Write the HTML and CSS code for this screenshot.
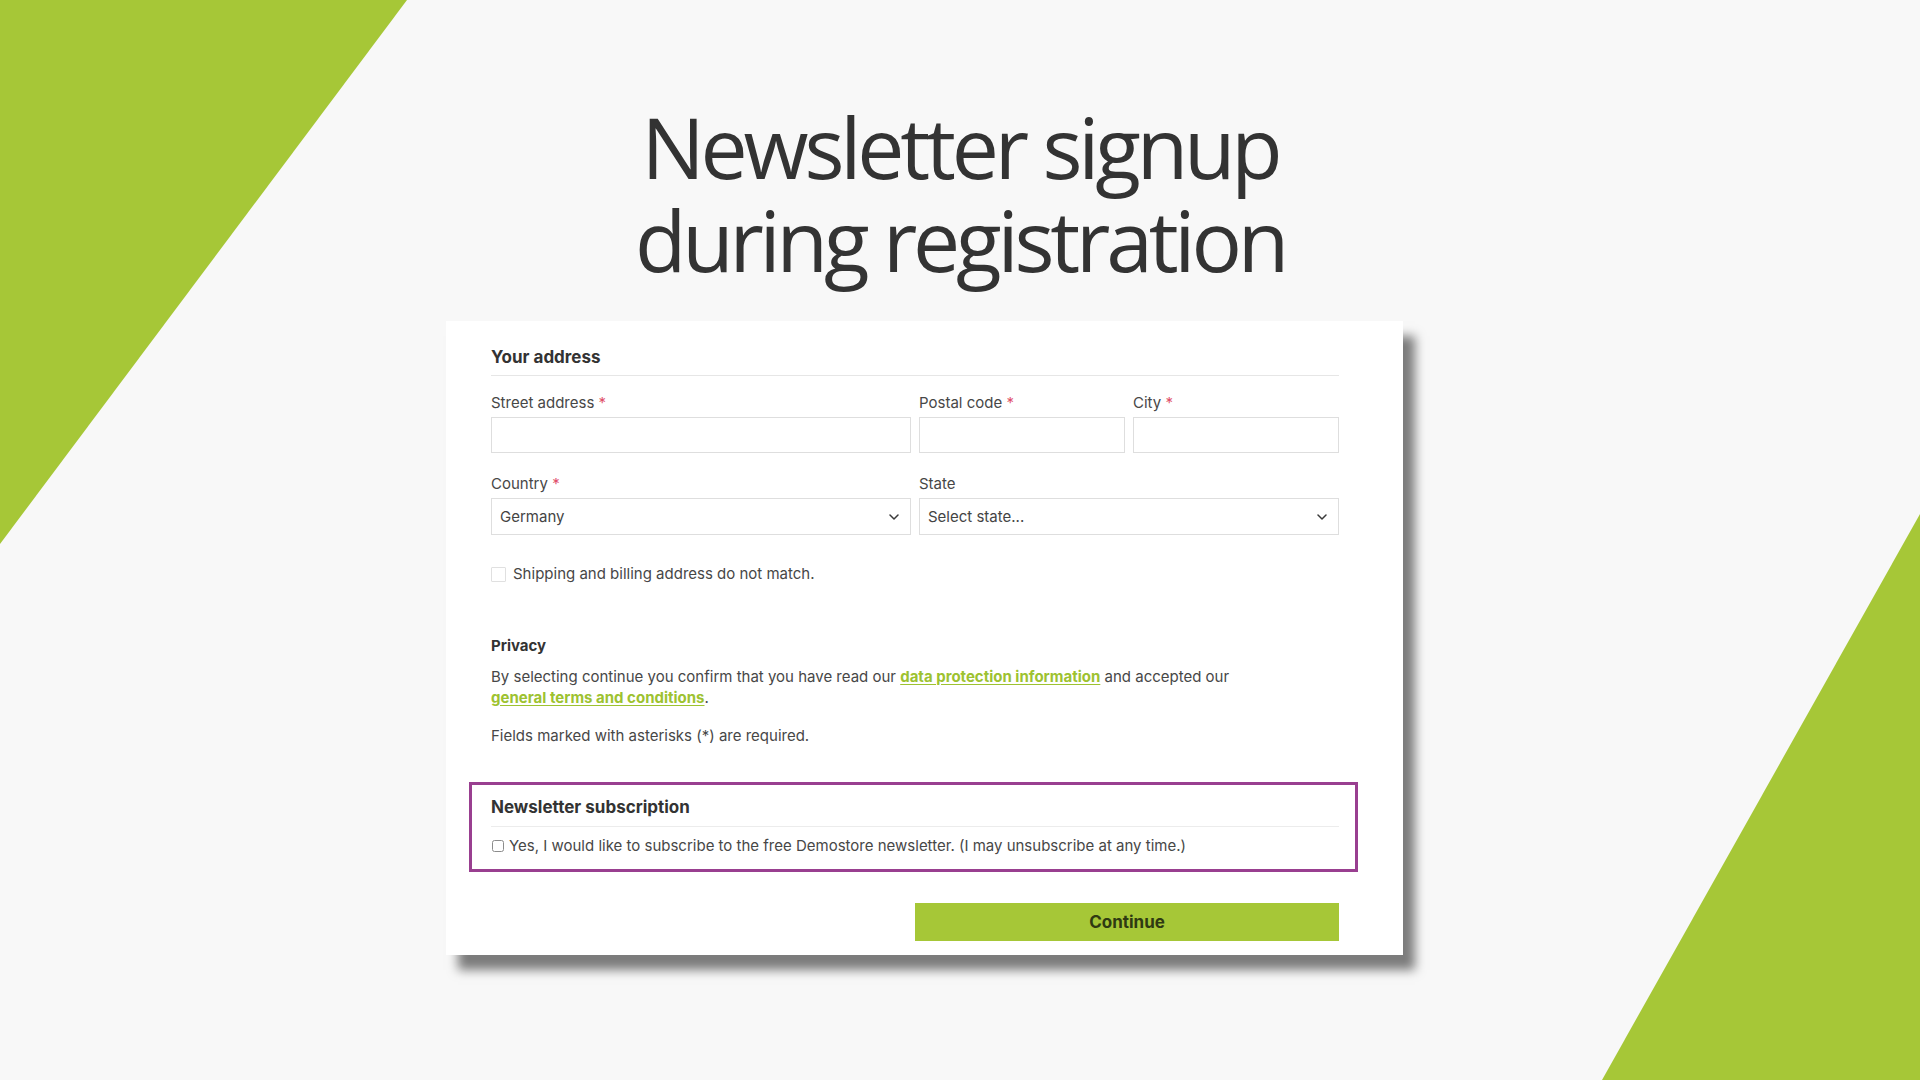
FILE: index.html
```html
<!DOCTYPE html>
<html lang="en">
<head>
<meta charset="utf-8">
<title>Newsletter signup during registration</title>
<link rel="stylesheet" href="styles.css">
</head>
<body>
<div class="page">
  <h1 class="title"><span class="title-line">Newsletter signup</span><span class="title-line">during registration</span></h1>

  <div class="card">
    <h2 class="section-title">Your address</h2>

    <div class="grid">
      <div class="field span2">
        <label class="label">Street address <span class="req">*</span></label>
        <div class="input"></div>
      </div>
      <div class="field">
        <label class="label">Postal code <span class="req">*</span></label>
        <div class="input"></div>
      </div>
      <div class="field">
        <label class="label">City <span class="req">*</span></label>
        <div class="input"></div>
      </div>
      <div class="field span2">
        <label class="label">Country <span class="req">*</span></label>
        <div class="input select">
          <span>Germany</span>
          <svg class="chev" width="10" height="6" viewBox="0 0 10 6"><path d="M1 1l4 4 4-4" fill="none" stroke="#3a3a3a" stroke-width="1.5" stroke-linecap="round" stroke-linejoin="round"/></svg>
        </div>
      </div>
      <div class="field span2">
        <label class="label">State</label>
        <div class="input select">
          <span>Select state...</span>
          <svg class="chev" width="10" height="6" viewBox="0 0 10 6"><path d="M1 1l4 4 4-4" fill="none" stroke="#3a3a3a" stroke-width="1.5" stroke-linecap="round" stroke-linejoin="round"/></svg>
        </div>
      </div>
    </div>

    <div class="check-row">
      <span class="box"></span>
      <span>Shipping and billing address do not match.</span>
    </div>

    <h3 class="privacy-title">Privacy</h3>
    <p class="privacy-text">By selecting continue you confirm that you have read our <a class="link">data protection information</a> and accepted our <a class="link">general terms and conditions</a>.</p>
    <p class="note">Fields marked with asterisks (*) are required.</p>

    <div class="newsletter">
      <h2 class="section-title">Newsletter subscription</h2>
      <div class="check-row small">
        <span class="box-sm"></span>
        <span>Yes, I would like to subscribe to the free Demostore newsletter. (I may unsubscribe at any time.)</span>
      </div>
    </div>

    <div class="actions">
      <button class="btn">Continue</button>
    </div>
  </div>
</div>
</body>
</html>
```

FILE: styles.css
```css
* { box-sizing: border-box; }

html, body {
  margin: 0;
  padding: 0;
}

body {
  background: #f8f8f8;
  font-family: Inter, "Liberation Sans", sans-serif;
  color: #474747;
}

.page {
  position: relative;
  width: 1920px;
  height: 1080px;
  overflow: hidden;
  padding-top: 100px;
}

.page::before,
.page::after {
  content: "";
  position: absolute;
  left: 0;
  top: 0;
  width: 1920px;
  height: 1080px;
  background: #a6c737;
  z-index: 0;
}

.page::before {
  clip-path: polygon(0 0, 407px 0, 0 544px);
}

.page::after {
  clip-path: polygon(1920px 514px, 1920px 1080px, 1602px 1080px);
}

.title {
  position: relative;
  z-index: 1;
  margin: 0;
  text-align: center;
  font-family: "Open Sans", sans-serif;
  font-weight: 400;
  font-size: 84px;
  line-height: 93px;
  letter-spacing: -0.05em;
  color: #333333;
}

.title-line {
  display: block;
}

.card {
  position: relative;
  z-index: 1;
  width: 957px;
  margin: 35px 0 0 446px;
  background: #ffffff;
  padding: 24px 64px 14px 45px;
  box-shadow: 12px 15px 10px rgba(0, 0, 0, 0.5);
}

.section-title {
  margin: 0;
  font-size: 17px;
  line-height: 24px;
  font-weight: 700;
  color: #333333;
  padding-bottom: 6px;
  border-bottom: 1px solid #e6e6e6;
}

.grid {
  display: grid;
  grid-template-columns: repeat(4, 1fr);
  column-gap: 8px;
  row-gap: 21px;
  margin-top: 17px;
}

.span2 { grid-column: span 2; }

.label {
  display: block;
  font-size: 15px;
  line-height: 20px;
  color: #474747;
  margin-bottom: 4px;
}

.req { color: #e0506a; }

.input {
  height: 36px;
  border: 1px solid #dedede;
  background: #ffffff;
}

.select {
  display: flex;
  align-items: center;
  justify-content: space-between;
  height: 37px;
  padding: 0 11px 0 8px;
  font-size: 15px;
  color: #444444;
}

.chev { display: block; }

.check-row {
  display: flex;
  align-items: center;
  gap: 7px;
  margin-top: 29px;
  font-size: 15px;
  line-height: 20px;
  color: #474747;
}

.box {
  width: 15px;
  height: 15px;
  border: 1px solid #e0e0e0;
  border-radius: 1px;
  flex: none;
}

.privacy-title {
  margin: 52px 0 0;
  font-size: 15px;
  line-height: 20px;
  font-weight: 700;
  color: #333333;
}

.privacy-text {
  margin: 10px 0 0;
  max-width: 770px;
  font-size: 15px;
  line-height: 21px;
  color: #474747;
}

.link {
  color: #9dc230;
  font-weight: 700;
  text-decoration: underline;
  text-underline-offset: 2px;
}

.note {
  margin: 18px 0 0;
  font-size: 15px;
  line-height: 20px;
  color: #474747;
}

.newsletter {
  margin: 36px -19px 0 -22px;
  border: 3px solid #993f90;
  padding: 10px 16px 13px 19px;
}

.newsletter .section-title {
  padding-bottom: 7px;
  border-bottom-color: #ececec;
}

.check-row.small {
  margin-top: 9px;
  gap: 5px;
}

.box-sm {
  width: 12px;
  height: 12px;
  margin-left: 1px;
  border: 1px solid #8c8c8c;
  border-radius: 2.5px;
  flex: none;
}

.actions {
  display: flex;
  justify-content: flex-end;
  margin-top: 31px;
}

.btn {
  width: 424px;
  height: 38px;
  border: none;
  background: #a6c737;
  font-family: Inter, "Liberation Sans", sans-serif;
  font-size: 17px;
  font-weight: 700;
  color: #2f3a12;
  cursor: pointer;
}
```
